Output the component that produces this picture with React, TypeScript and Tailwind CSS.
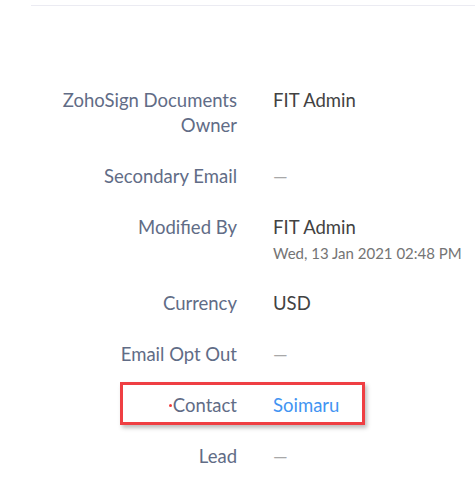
const rows: { label: string; value?: string; sub?: string; link?: boolean; required?: boolean }[] = [
  { label: "ZohoSign Documents Owner", value: "FIT Admin" },
  { label: "Secondary Email" },
  { label: "Modified By", value: "FIT Admin", sub: "Wed, 13 Jan 2021 02:48 PM" },
  { label: "Currency", value: "USD" },
  { label: "Email Opt Out" },
  { label: "Contact", value: "Soimaru", link: true, required: true },
  { label: "Lead" },
];

export default function App() {
  return (
    <div className="h-[493px] w-[475px] overflow-hidden bg-white font-['Lato','Liberation_Sans',sans-serif]">
      <div className="ml-[31px] mt-[5px] h-px bg-[#ebebf2]" />

      <div className="pt-[69px]">
        {rows.map((row) => (
          <div key={row.label} className="relative grid grid-cols-[197px_1fr] gap-x-[36px] py-[13px] pl-[40px]">
            <div className="text-right text-[18.5px] leading-[25px] text-[#616c86]">
              {row.required ? (
                <span className="mr-[1px] inline-block h-[3px] w-[3px] -translate-y-[2px] rounded-full bg-[#f03c3c] align-middle" />
              ) : null}
              {row.label}
            </div>
            <div>
              {row.value ? (
                <div
                  className={
                    row.link
                      ? "text-[18.5px] leading-[25px] text-[#4294f2]"
                      : "text-[18.5px] leading-[25px] text-[#424242]"
                  }
                >
                  {row.value}
                </div>
              ) : (
                <div className="text-[18.5px] leading-[25px] text-[#a8a8a8]">—</div>
              )}
              {row.sub ? (
                <div className="mt-[1px] text-[15px] leading-[24px] text-[#747474]">{row.sub}</div>
              ) : null}
            </div>

            {row.link ? (
              <div className="pointer-events-none absolute left-[120px] top-[2px] h-[43px] w-[245px] border-[3px] border-[#ef3f43] shadow-[2px_3px_4px_rgba(0,0,0,0.25)]" />
            ) : null}
          </div>
        ))}
      </div>
    </div>
  );
}
